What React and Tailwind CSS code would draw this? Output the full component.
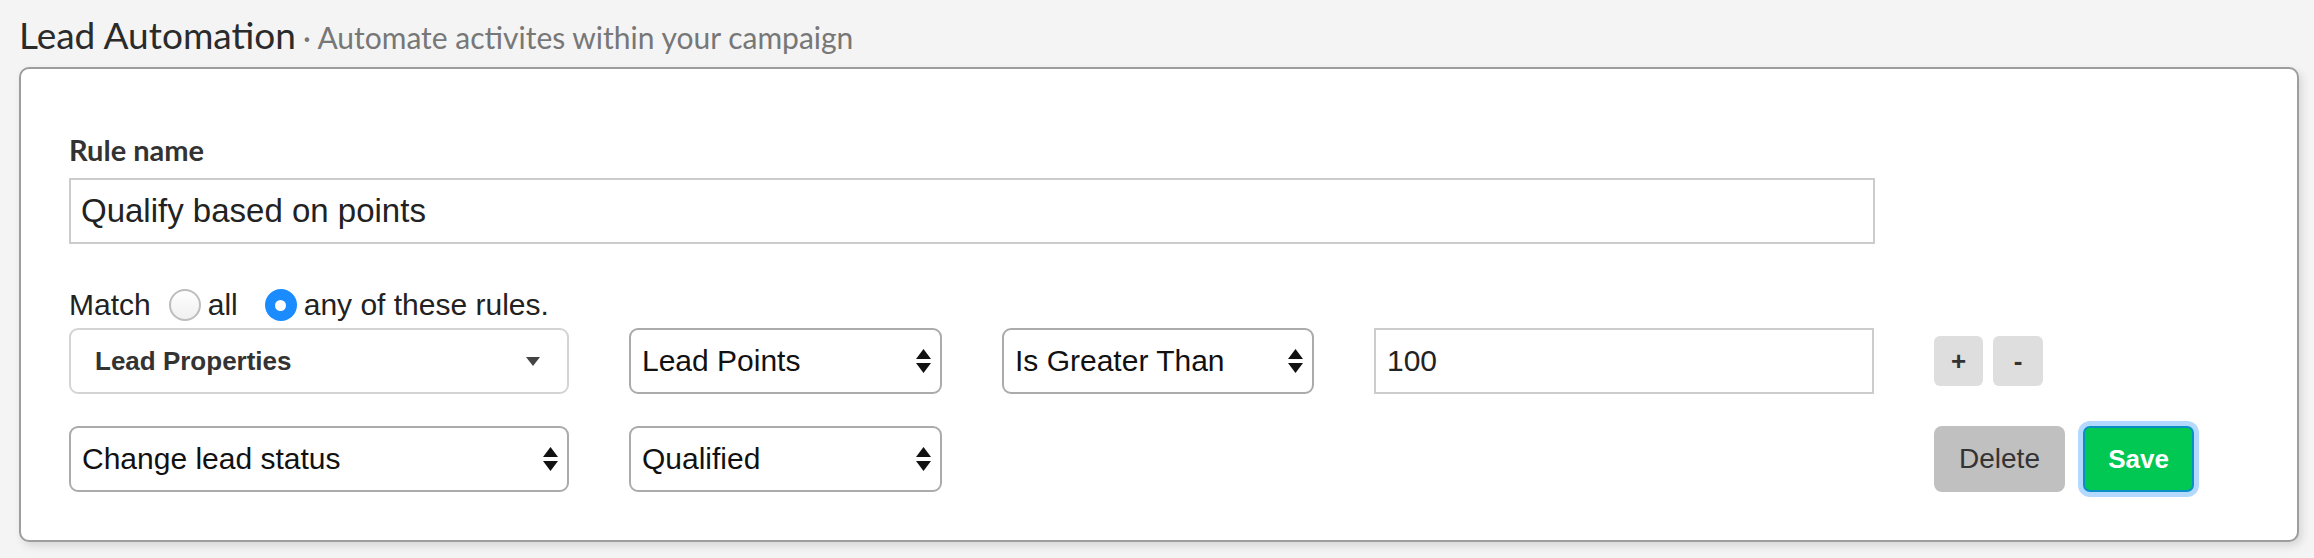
import { useState } from 'react'

const formFont = { fontFamily: '"Liberation Sans", Arial, sans-serif' }
const headFont = { fontFamily: 'Lato, "Open Sans", sans-serif' }

function UpDown() {
  return (
    <svg width="15" height="24" viewBox="0 0 15 24" className="shrink-0">
      <path d="M7.5 0 L15 10 L0 10 Z" fill="#111" />
      <path d="M0 14 L15 14 L7.5 24 Z" fill="#111" />
    </svg>
  )
}

function Caret() {
  return (
    <svg width="14" height="9" viewBox="0 0 14 9" className="shrink-0">
      <path d="M0 0 L14 0 L7 9 Z" fill="#444" />
    </svg>
  )
}

function SelectBox({ value, light }) {
  return (
    <div
      className={`flex h-[66px] items-center justify-between rounded-[9px] border-2 bg-white pl-[11px] pr-[9px] text-[30px] leading-none text-[#111] ${
        light ? 'border-[#cfcfcf]' : 'border-[#ababab]'
      }`}
      style={formFont}
    >
      <span>{value}</span>
      <UpDown />
    </div>
  )
}

function Radio({ checked, label, onClick }) {
  return (
    <button onClick={onClick} className="flex items-center gap-[7px]">
      {checked ? (
        <span className="flex h-[32px] w-[32px] items-center justify-center rounded-full bg-[#1a8cff]">
          <span className="h-[11px] w-[11px] rounded-full bg-white" />
        </span>
      ) : (
        <span className="h-[32px] w-[32px] rounded-full border-2 border-[#bdbdbd] bg-gradient-to-b from-white to-[#f0f0f0]" />
      )}
      <span>{label}</span>
    </button>
  )
}

export default function App() {
  const [match, setMatch] = useState('any')

  return (
    <div className="min-h-[558px] bg-[#f4f4f4] pl-[19px] pr-[15px] pt-[16px]">
      <div className="flex items-baseline gap-[7px] leading-none" style={headFont}>
        <h1 className="text-[37px] text-[#2b2b2b]">Lead Automation</h1>
        <span className="text-[30px] text-[#777]">· Automate activites within your campaign</span>
      </div>

      <div className="mt-[14px] rounded-[10px] border-2 border-[#9d9d9d] bg-white pb-[48px] pl-[48px] pt-[66px] shadow-[3px_4px_8px_rgba(0,0,0,0.12)]">
        <label className="block text-[29px] font-bold leading-none text-[#333]" style={headFont}>
          Rule name
        </label>
        <input
          defaultValue="Qualify based on points"
          className="mt-[14px] block h-[66px] w-[1806px] border-2 border-[#cccccc] px-[10px] text-[33px] text-[#222] outline-none"
          style={formFont}
        />

        <div className="mt-[45px] flex h-[32px] items-center text-[30px] leading-none text-[#222]" style={formFont}>
          <span className="mr-[18px]">Match</span>
          <Radio checked={match === 'all'} label="all" onClick={() => setMatch('all')} />
          <span className="w-[27px]" />
          <Radio checked={match === 'any'} label="any of these rules." onClick={() => setMatch('any')} />
        </div>

        <div className="mt-[7px] grid grid-cols-[500px_313px_312px_500px_1fr] gap-x-[60px] gap-y-[32px]">
          <div
            className="flex h-[66px] items-center justify-between rounded-[9px] border-2 border-[#d4d4d4] bg-white pl-[24px] pr-[27px] text-[26px] font-bold leading-none text-[#333]"
            style={formFont}
          >
            <span>Lead Properties</span>
            <Caret />
          </div>
          <SelectBox value="Lead Points" />
          <SelectBox value="Is Greater Than" />
          <input
            defaultValue="100"
            className="h-[66px] w-full border-2 border-[#cccccc] px-[11px] text-[30px] text-[#222] outline-none"
            style={formFont}
          />
          <div className="flex items-center gap-[10px]" style={formFont}>
            <button className="h-[50px] w-[49px] rounded-[6px] bg-[#dedede] text-[26px] font-bold leading-none text-[#333]">
              +
            </button>
            <button className="h-[50px] w-[50px] rounded-[6px] bg-[#dedede] text-[26px] font-bold leading-none text-[#333]">
              -
            </button>
          </div>

          <SelectBox value="Change lead status" />
          <SelectBox value="Qualified" />
          <div />
          <div />
          <div className="flex items-center gap-[18px]" style={formFont}>
            <button className="h-[66px] w-[131px] rounded-[8px] bg-[#c0c0c0] text-[28px] leading-none text-[#333]">
              Delete
            </button>
            <button className="h-[66px] w-[111px] rounded-[7px] border-2 border-[#0a8fc4] bg-[#00c853] text-[26px] font-bold leading-none text-white ring-[5px] ring-[#b3d9ff]">
              Save
            </button>
          </div>
        </div>
      </div>
    </div>
  )
}
